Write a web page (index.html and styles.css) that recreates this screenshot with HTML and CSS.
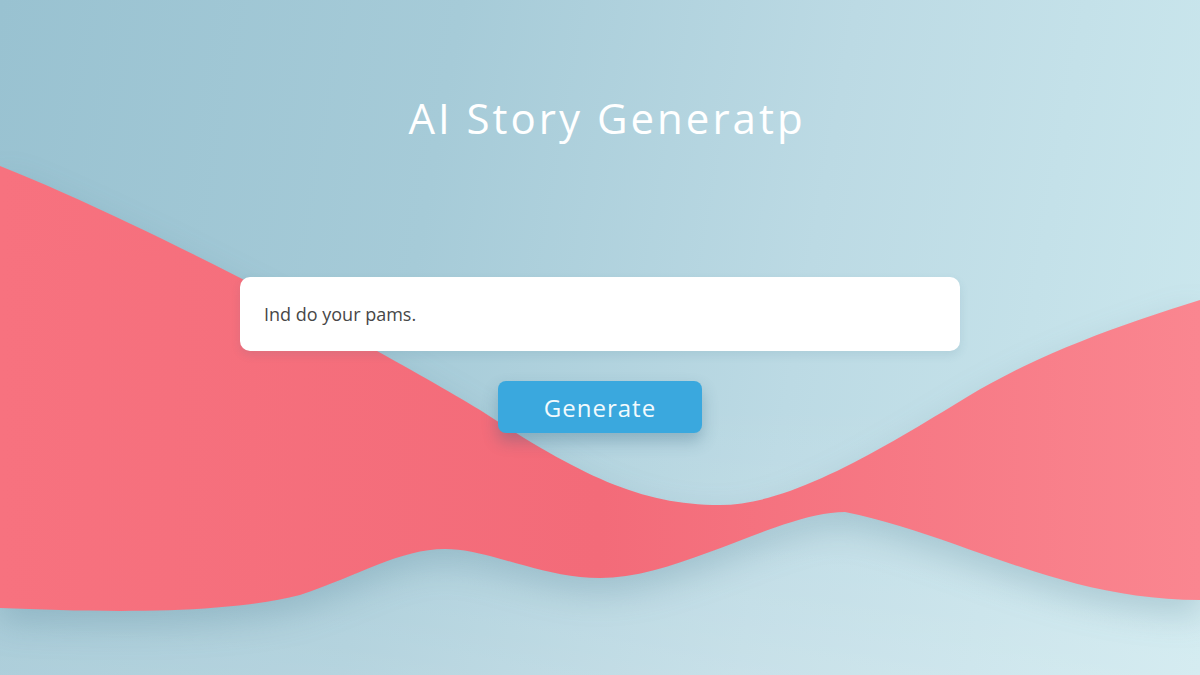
FILE: index.html
```html
<!DOCTYPE html>
<html lang="en">
<head>
    <meta charset="UTF-8">
    <meta name="viewport" content="width=device-width, initial-scale=1.0">
    <link rel="stylesheet" href="styles.css">
    <title>AI Story Generator</title>
</head>
<body>
    <div class="page">
        <!-- Background wave -->
        <svg class="wave" viewBox="0 0 1200 675" preserveAspectRatio="none" aria-hidden="true">
            <defs>
                <linearGradient id="waveFill" x1="0" y1="0" x2="1" y2="0">
                    <stop offset="0" stop-color="#f7727f"/>
                    <stop offset="0.5" stop-color="#f36b79"/>
                    <stop offset="1" stop-color="#fa8690"/>
                </linearGradient>
            </defs>
            <path fill="url(#waveFill)" d="M0,166 C160,230 380,350 480,410 C580,475 640,505 720,505 C790,505 880,450 967,397 C1040,353 1120,325 1200,300 L1200,600 C1060,600 960,535 845,512 C780,512 680,578 600,578 C540,578 490,549 445,549 C400,549 360,575 300,595 C220,615 100,612 0,608 Z"/>
        </svg>

        <div class="content">
            <h1 class="title">AI Story Generatp</h1>

            <div class="prompt-box">
                <input type="text" class="prompt-input" value="Ind do your pams.">
            </div>

            <button type="button" class="generate-button">Generate</button>
        </div>
    </div>
</body>
</html>
```

FILE: styles.css
```css
body {
    margin: 0;
    padding: 0;
    font-family: 'Open Sans', 'Liberation Sans', sans-serif;
}

.page {
    position: relative;
    width: 100%;
    height: 675px;
    overflow: hidden;
    background:
        linear-gradient(to bottom, rgba(255, 255, 255, 0) 60%, rgba(255, 255, 255, 0.18) 100%),
        linear-gradient(100deg, #99c2d1 0%, #a6cbd8 35%, #bcdae4 65%, #cce8ee 100%);
}

.wave {
    position: absolute;
    top: 0;
    left: 0;
    width: 100%;
    height: 100%;
    filter: drop-shadow(0 14px 16px rgba(70, 120, 140, 0.25));
}

.content {
    position: relative;
    display: flex;
    flex-direction: column;
    align-items: center;
    padding-top: 90px;
}

.title {
    margin: 0;
    padding-left: 14px;
    font-family: 'Open Sans', sans-serif;
    font-size: 42px;
    font-weight: 400;
    letter-spacing: 3px;
    line-height: 56px;
    color: #ffffff;
}

.prompt-box {
    margin-top: 131px;
    width: 720px;
    height: 74px;
    background-color: #ffffff;
    border-radius: 10px;
    box-shadow: 0 4px 10px rgba(60, 110, 130, 0.12);
    display: flex;
    align-items: center;
}

.prompt-input {
    width: 100%;
    border: none;
    outline: none;
    background: transparent;
    padding: 0 24px;
    font-family: 'Open Sans', sans-serif;
    font-size: 18px;
    color: #474747;
}

.generate-button {
    margin-top: 30px;
    width: 204px;
    height: 52px;
    border: none;
    border-radius: 8px;
    background-color: #3aa8de;
    color: #f2fafd;
    font-family: 'Open Sans', sans-serif;
    font-size: 24px;
    letter-spacing: 1px;
    cursor: pointer;
    box-shadow: 0 8px 16px rgba(40, 90, 120, 0.3);
}
```
